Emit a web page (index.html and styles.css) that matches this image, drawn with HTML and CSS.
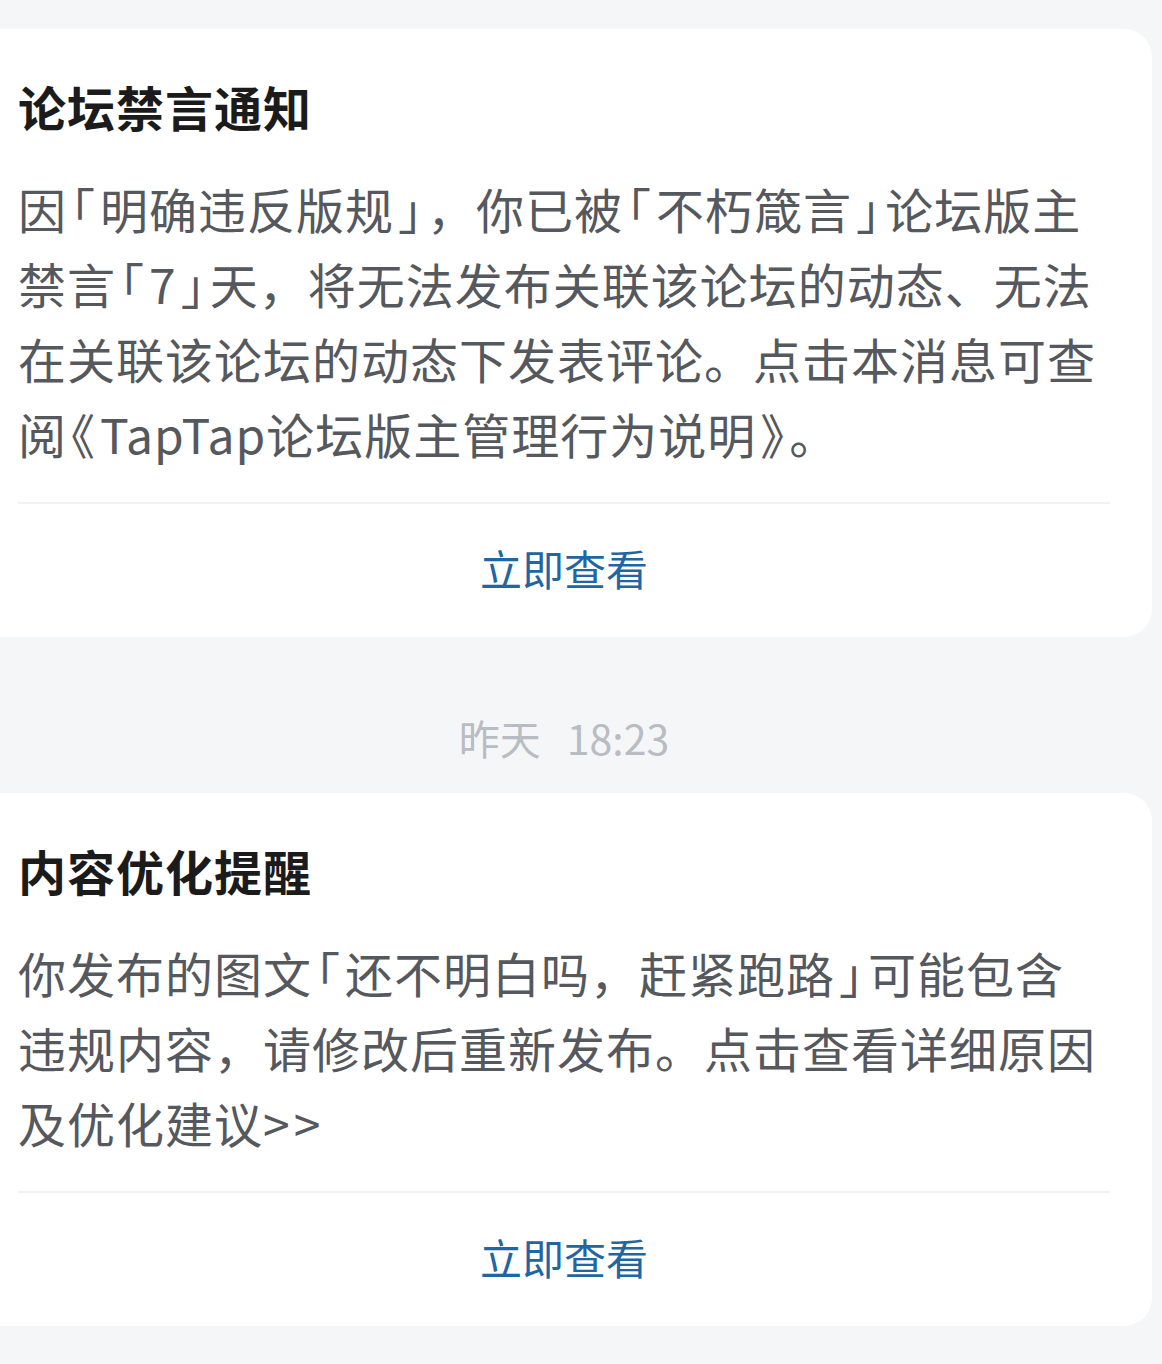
FILE: index.html
```html
<!DOCTYPE html>
<html lang="zh-CN">
<head>
    <meta charset="UTF-8">
    <title>消息通知</title>
    <link rel="stylesheet" href="styles.css">
</head>
<body>
    <div class="msg_list">
        <div class="msg_card">
            <h3 class="msg_title">论坛禁言通知</h3>
            <p class="msg_text">因<span class="pn">「</span>明确违反版规<span class="pn">」</span>，你已被<span class="pn">「</span>不朽箴言<span class="pn">」</span>论坛版主<br>禁言<span class="pn">「</span>7<span class="pn">」</span>天，将无法发布关联该论坛的动态、无法<br>在关联该论坛的动态下发表评论。点击本消息可查<br>阅<span class="pn">《</span>TapTap论坛版主管理行为说明<span class="pn">》</span><span class="pn_s">。</span></p>
            <div class="msg_line"></div>
            <a class="msg_btn" href="#">立即查看</a>
        </div>

        <div class="msg_time">昨天<span class="clock">18:23</span></div>

        <div class="msg_card">
            <h3 class="msg_title">内容优化提醒</h3>
            <p class="msg_text">你发布的图文<span class="pn">「</span>还不明白吗，赶紧跑路<span class="pn">」</span>可能包含<br>违规内容，请修改后重新发布。点击查看详细原因<br>及优化建议<span class="more">&gt;&gt;</span></p>
            <div class="msg_line"></div>
            <a class="msg_btn" href="#">立即查看</a>
        </div>
    </div>
</body>
</html>
```

FILE: styles.css
```css
* {
    margin: 0;
    padding: 0;
    border: 0;
}
html, body {
    background-color: #f5f6f8;
}
body {
    font-family: "Noto Sans CJK SC", "Noto Sans", sans-serif;
}
.msg_list {
    padding: 29px 10px 0 0;
}
/* 消息卡片，左边贴着屏幕 */
.msg_card {
    background-color: #fff;
    border-radius: 0 28px 28px 0;
    padding: 47px 42px 0 18px;
}
.msg_title {
    font-size: 48px;
    line-height: 60px;
    font-weight: 700;
    letter-spacing: 1px;
    color: #1b1b1b;
}
.msg_text {
    margin-top: 35px;
    font-size: 48px;
    line-height: 75px;
    letter-spacing: 1px;
    color: #55585d;
    white-space: nowrap;
}
/* 引号书名号用半宽 */
.msg_text .pn {
    font-feature-settings: "halt";
    padding: 0 4px;
}
.msg_text .pn_s {
    font-feature-settings: "halt";
}
.msg_text .more {
    letter-spacing: 4px;
}
.msg_line {
    height: 2px;
    margin-top: 31px;
    background-color: #f2f2f3;
}
.msg_btn {
    display: block;
    height: 133px;
    line-height: 127px;
    text-align: center;
    font-size: 42px;
    color: #1f66a2;
    text-decoration: none;
}
.msg_time {
    margin: 80px 0 36px;
    padding: 0 42px 0 18px;
    font-size: 41px;
    line-height: 40px;
    text-align: center;
    color: #b9bcc2;
}
.msg_time .clock {
    margin-left: 26px;
}
```
